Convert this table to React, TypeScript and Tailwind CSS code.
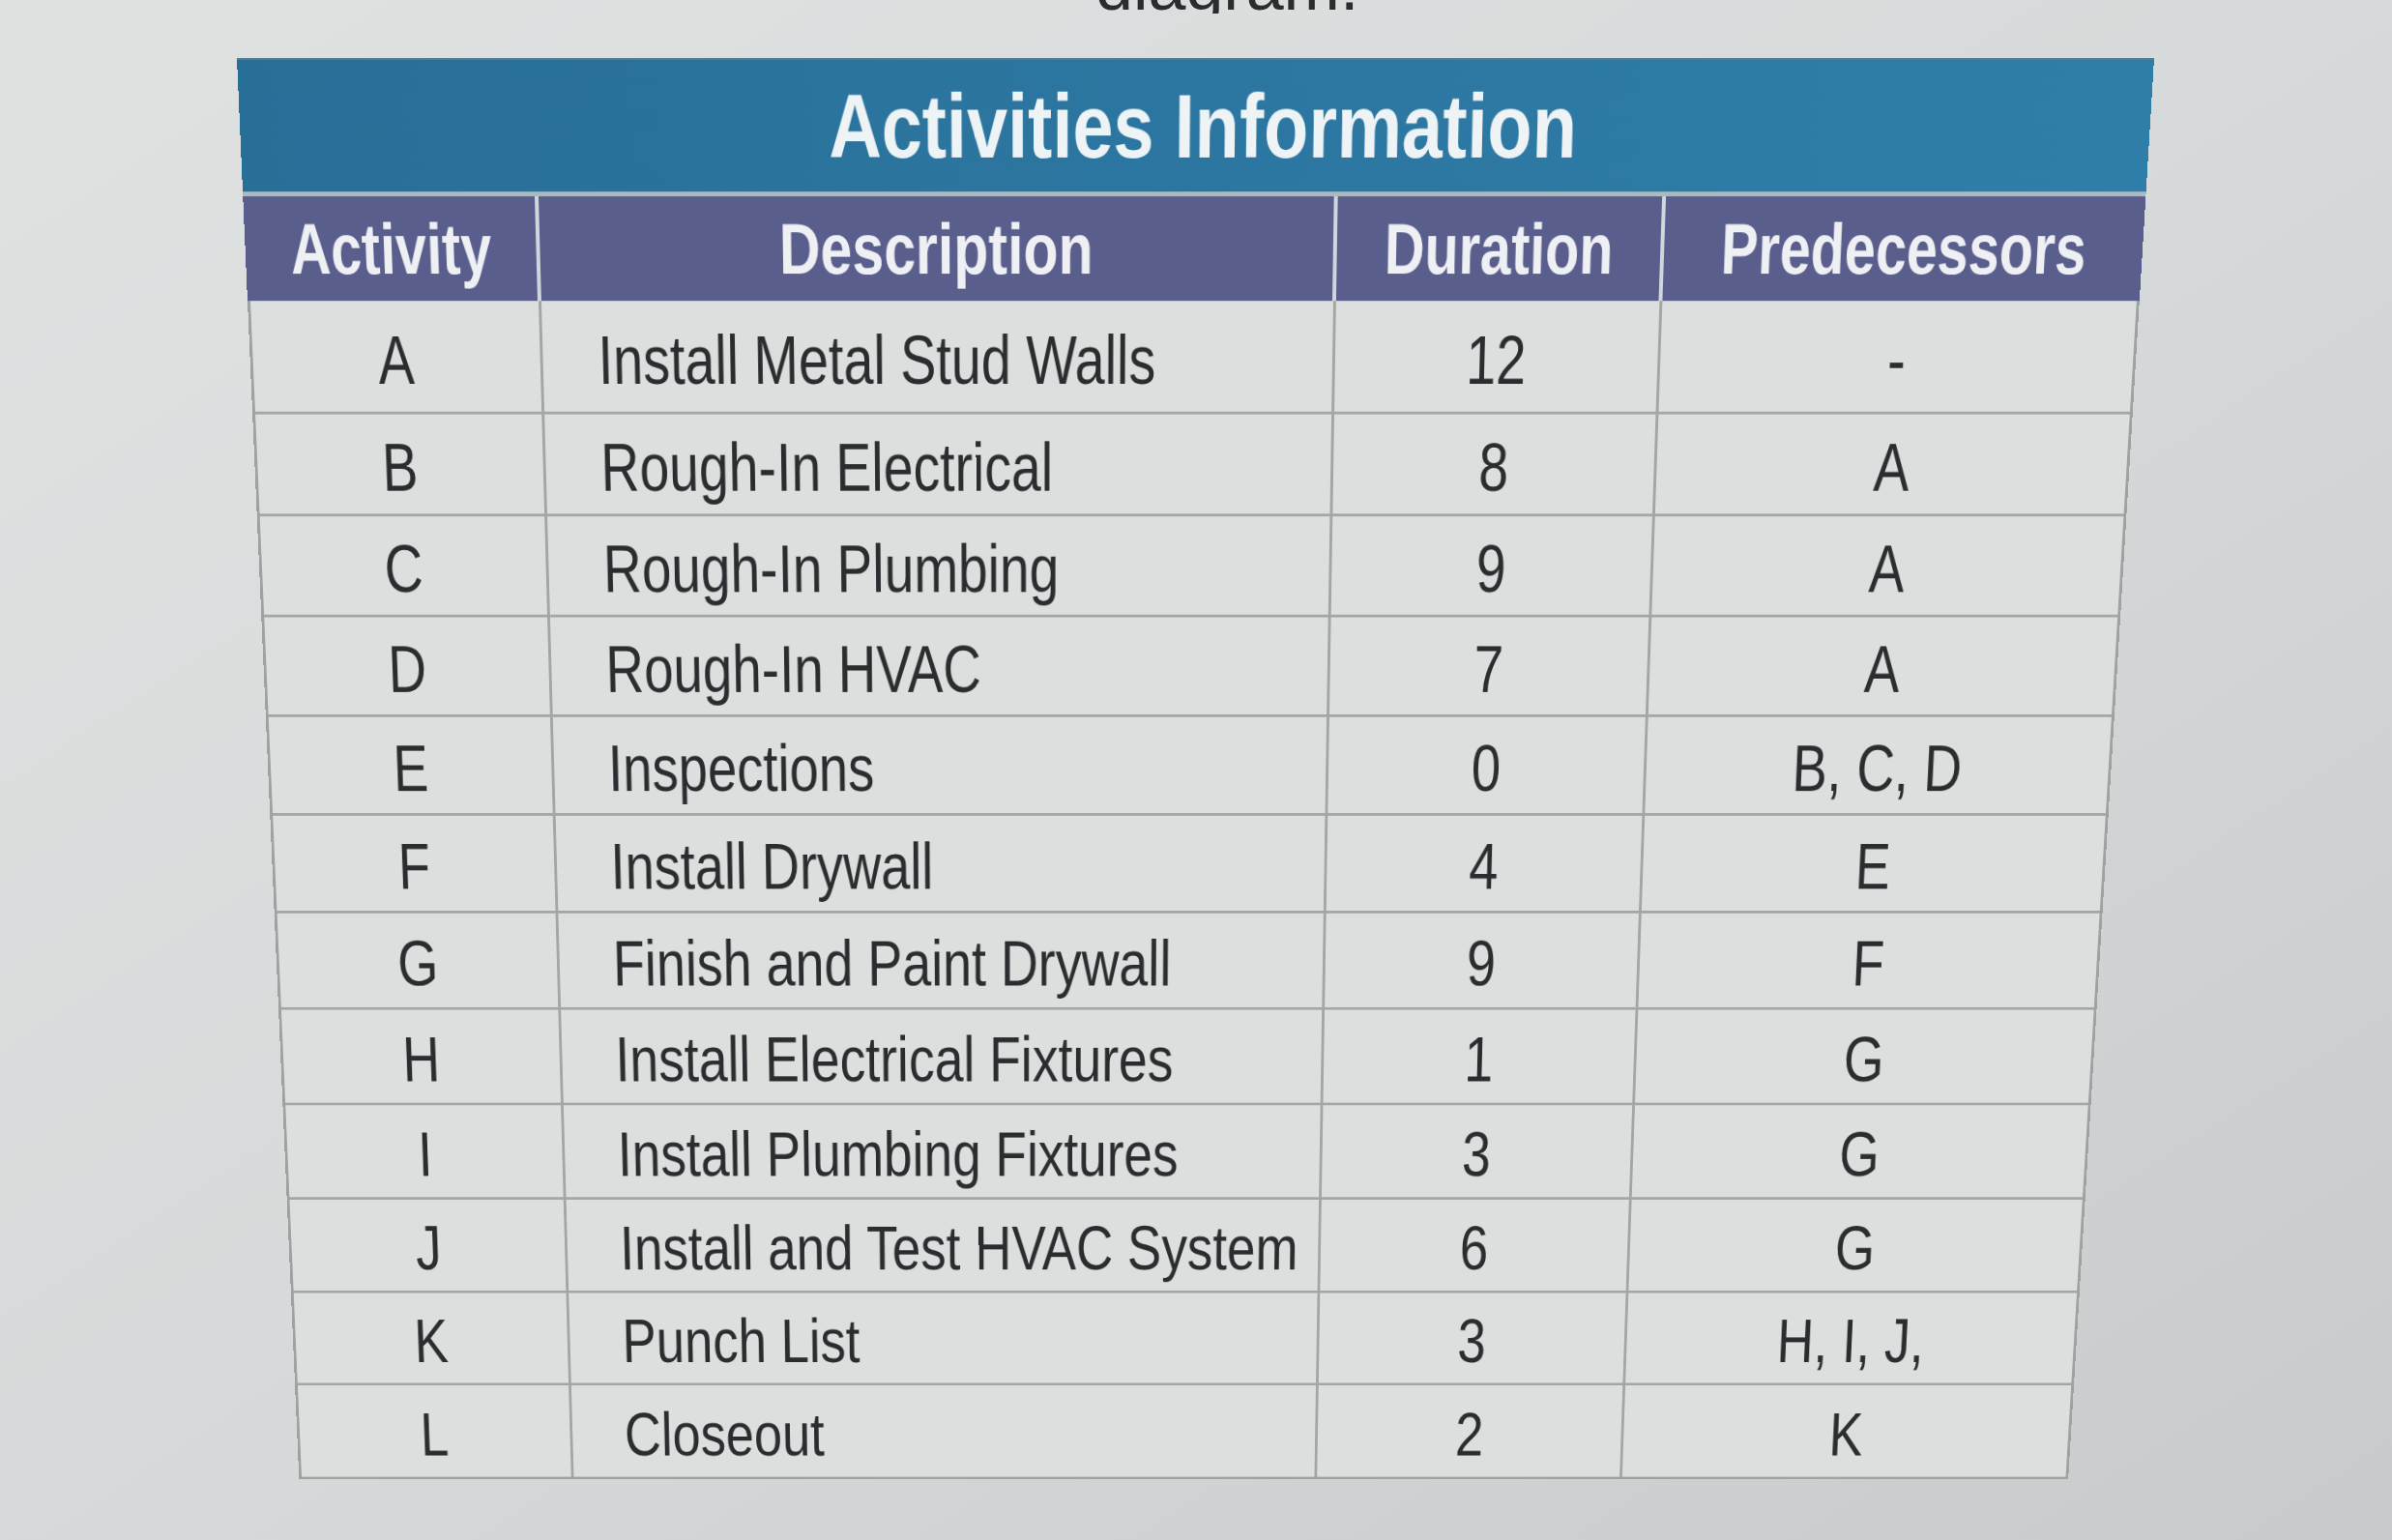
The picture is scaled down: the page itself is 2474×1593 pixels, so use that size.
const rows = [
  { id: "A", desc: "Install Metal Stud Walls", dur: "12", pred: "-" },
  { id: "B", desc: "Rough-In Electrical", dur: "8", pred: "A" },
  { id: "C", desc: "Rough-In Plumbing", dur: "9", pred: "A" },
  { id: "D", desc: "Rough-In HVAC", dur: "7", pred: "A" },
  { id: "E", desc: "Inspections", dur: "0", pred: "B, C, D" },
  { id: "F", desc: "Install Drywall", dur: "4", pred: "E" },
  { id: "G", desc: "Finish and Paint Drywall", dur: "9", pred: "F" },
  { id: "H", desc: "Install Electrical Fixtures", dur: "1", pred: "G" },
  { id: "I", desc: "Install Plumbing Fixtures", dur: "3", pred: "G" },
  { id: "J", desc: "Install and Test HVAC System", dur: "6", pred: "G" },
  { id: "K", desc: "Punch List", dur: "3", pred: "H, I, J," },
  { id: "L", desc: "Closeout", dur: "2", pred: "K" },
];

// condensed look: Liberation Sans squeezed horizontally
function Narrow({ children, left }: { children: React.ReactNode; left?: boolean }) {
  return (
    <span className={`inline-block whitespace-nowrap scale-x-[0.765] ${left ? "origin-left" : "origin-center"}`}>
      {children}
    </span>
  );
}

export default function App() {
  return (
    <div className="h-[1593px] w-full overflow-hidden bg-linear-to-br from-[#e0e2e2] via-[#d7dada] to-[#c8cbcb] font-['Liberation_Sans',Arial,sans-serif]">
      {/* caption above the table, cut off by the photo */}
      <div className="h-[14px] overflow-hidden pl-[1133px]">
        <p className="-mt-[49px] text-[70px] leading-none text-[#2a2c2e]">diagram.</p>
      </div>

      <div className="ml-[245px] mt-[46px] w-[1983px] origin-[42%_0] [transform:perspective(2000px)_rotateX(-6deg)]">
        <div className="flex h-[140px] items-center justify-center border-t-2 border-[#5d7a8c] bg-linear-to-r from-[#286f98] to-[#2f7eaa]">
          <h1 className="inline-block scale-x-[0.8] whitespace-nowrap pl-5 text-[95px] font-bold leading-none text-[#eef3f5]">
            Activities Information
          </h1>
        </div>
        <div className="h-[5px] bg-[#a9bac4]" />

        <div className="grid h-[111px] grid-cols-[308px_833px_342px_500px] bg-[#5a5e8c] text-[76px] font-bold leading-none text-[#eef0f4]">
          <div className="flex items-center justify-center border-r-4 border-[#cfd6dc]"><Narrow>Activity</Narrow></div>
          <div className="flex items-center justify-center border-r-4 border-[#cfd6dc]"><span className="inline-block scale-x-[0.785] whitespace-nowrap">Description</span></div>
          <div className="flex items-center justify-center border-r-4 border-[#cfd6dc]"><Narrow>Duration</Narrow></div>
          <div className="flex items-center justify-center"><Narrow>Predecessors</Narrow></div>
        </div>

        <div className="border-x-[3px] border-b-[3px] border-[#9ea3a2] bg-[#dcdfdd] text-[74px] leading-none text-[#2a2d2f]">
          {rows.map((r, i) => (
            <div
              key={r.id}
              className={`grid grid-cols-[305px_833px_342px_497px] ${i === 0 ? "h-[122px]" : "h-[111px]"} ${i < rows.length - 1 ? "border-b-[3px] border-[#a2a7a6]" : ""}`}
            >
              <div className="flex items-center justify-center border-r-[3px] border-[#a2a7a6] pt-2"><Narrow>{r.id}</Narrow></div>
              <div className="flex items-center border-r-[3px] border-[#a2a7a6] pl-[58px] pt-2"><Narrow left>{r.desc}</Narrow></div>
              <div className="flex items-center justify-center border-r-[3px] border-[#a2a7a6] pt-2"><Narrow>{r.dur}</Narrow></div>
              <div className="flex items-center justify-center pt-2"><Narrow>{r.pred}</Narrow></div>
            </div>
          ))}
        </div>
      </div>
    </div>
  );
}
